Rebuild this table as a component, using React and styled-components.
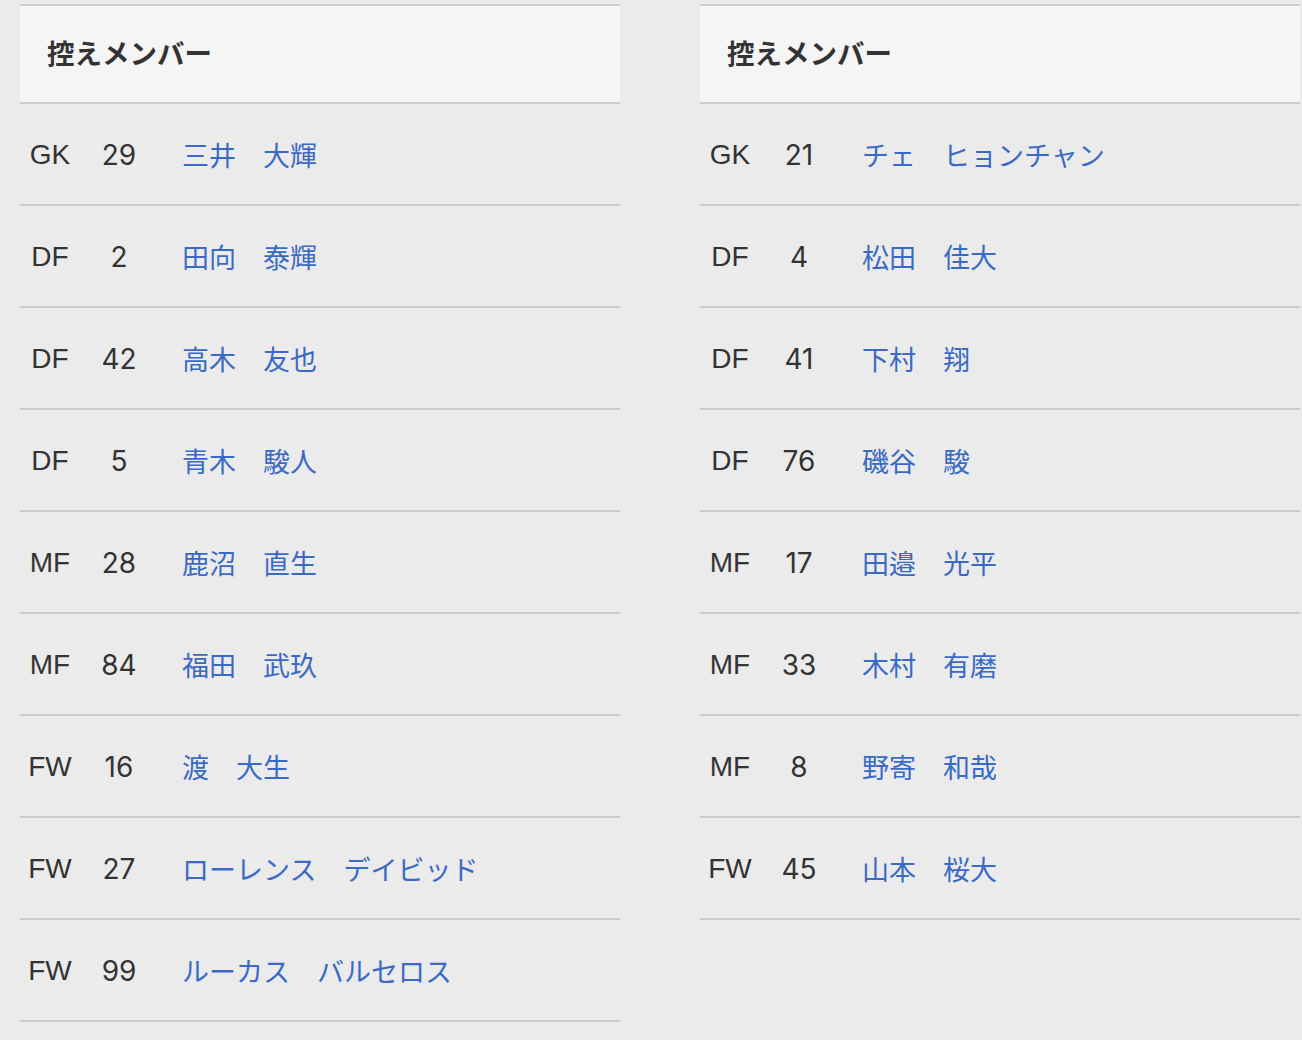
import React from "react";
import styled, { createGlobalStyle } from "styled-components";

const Global = createGlobalStyle`
  html, body { margin: 0; padding: 0; background: #ebebeb; }
  body { font-family: "Liberation Sans", Arial, "Noto Sans CJK JP", sans-serif; color: #333; }
`;

const Page = styled.div`
  display: flex;
  align-items: flex-start;
  gap: 80px;
  padding: 4px 0 0 20px;
  min-height: 1040px;
  box-sizing: border-box;
`;

const Table = styled.section`
  width: 600px;
  display: flex;
  flex-direction: column;
`;

const Header = styled.h2`
  margin: 0;
  height: 91px;
  display: flex;
  align-items: center;
  padding: 0 0 5px 27px;
  background: #f5f5f5;
  border-top: 2px solid #cccccc;
  border-bottom: 2px solid #cccccc;
  font-family: "Noto Sans CJK JP", sans-serif;
  font-size: 27.5px;
  font-weight: 700;
  color: #333;
  box-sizing: content-box;
`;

const Row = styled.div`
  display: grid;
  grid-template-columns: 60px 78px 1fr;
  align-items: center;
  height: 100px;
  border-bottom: 2px solid #cccccc;
  font-size: 28px;
`;

const Pos = styled.span`
  text-align: center;
  color: #333;
  padding-top: 2px;
`;

const Num = styled.span`
  text-align: center;
  color: #333;
  font-family: Inter, "Liberation Sans", sans-serif;
  font-size: 28px;
  padding-top: 2px;
`;

const Name = styled.a`
  padding-left: 24px;
  color: #3a6ac6;
  text-decoration: none;
  font-family: "Noto Sans CJK JP", sans-serif;
  font-size: 27px;
  white-space: pre;
`;

const left = [
  ["GK", "29", "三井　大輝"],
  ["DF", "2", "田向　泰輝"],
  ["DF", "42", "高木　友也"],
  ["DF", "5", "青木　駿人"],
  ["MF", "28", "鹿沼　直生"],
  ["MF", "84", "福田　武玖"],
  ["FW", "16", "渡　大生"],
  ["FW", "27", "ローレンス　デイビッド"],
  ["FW", "99", "ルーカス　バルセロス"],
];

const right = [
  ["GK", "21", "チェ　ヒョンチャン"],
  ["DF", "4", "松田　佳大"],
  ["DF", "41", "下村　翔"],
  ["DF", "76", "磯谷　駿"],
  ["MF", "17", "田邉　光平"],
  ["MF", "33", "木村　有磨"],
  ["MF", "8", "野寄　和哉"],
  ["FW", "45", "山本　桜大"],
];

function Members({ rows }) {
  return (
    <Table>
      <Header>控えメンバー</Header>
      {rows.map(([p, n, name], i) => (
        <Row key={i}>
          <Pos>{p}</Pos>
          <Num>{n}</Num>
          <Name href="#">{name}</Name>
        </Row>
      ))}
    </Table>
  );
}

export default function App() {
  return (
    <>
      <Global />
      <Page>
        <Members rows={left} />
        <Members rows={right} />
      </Page>
    </>
  );
}
